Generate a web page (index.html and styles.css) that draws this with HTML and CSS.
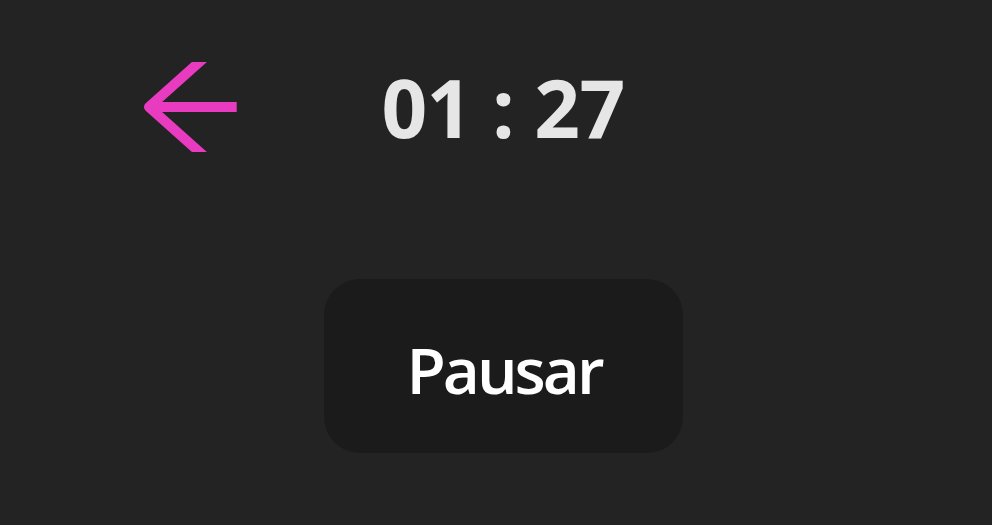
FILE: index.html
```html
<!DOCTYPE html>
<html lang="pt">
<head>
<meta charset="utf-8">
<title>Timer</title>
<link rel="stylesheet" href="styles.css">
</head>
<body>
<main class="screen">
  <header class="top">
    <button class="back" aria-label="Voltar">
      <svg width="100" height="90" viewBox="0 0 100 90" fill="none" stroke="#e83bc0" stroke-width="10" stroke-linecap="butt" stroke-linejoin="round">
        <path d="M9 45H96.7"/>
        <path d="M65 -5L9 45L65 95"/>
      </svg>
    </button>
    <div class="time">01 : 27</div>
  </header>
  <div class="actions">
    <button class="pause">Pausar</button>
  </div>
</main>
</body>
</html>
```
FILE: styles.css
```css
html, body {
  margin: 0;
  padding: 0;
  background: #232323;
  height: 100%;
}
.screen {
  display: flex;
  flex-direction: column;
  align-items: center;
  padding-left: 14px;
  font-family: "Open Sans", "Noto Sans", sans-serif;
}
.top {
  position: relative;
  display: flex;
  justify-content: center;
  width: 100%;
  margin-top: 54px;
}
.back {
  position: absolute;
  left: 126px;
  top: 8px;
  background: none;
  border: 0;
  padding: 0;
  cursor: pointer;
}
.back svg { display: block; }
.time {
  color: #e6e6e6;
  font-weight: 700;
  font-size: 80px;
  line-height: 106px;
  letter-spacing: -0.6px;
}
.actions {
  margin-top: 119px;
}
.pause {
  display: flex;
  align-items: center;
  justify-content: center;
  width: 359px;
  height: 174px;
  padding: 6px 0 0 2px;
  border: 0;
  border-radius: 36px;
  background: #1b1b1b;
  color: #ffffff;
  font-family: "Open Sans", "Noto Sans", sans-serif;
  font-weight: 600;
  font-size: 64px;
  letter-spacing: -3px;
  cursor: pointer;
}
```
